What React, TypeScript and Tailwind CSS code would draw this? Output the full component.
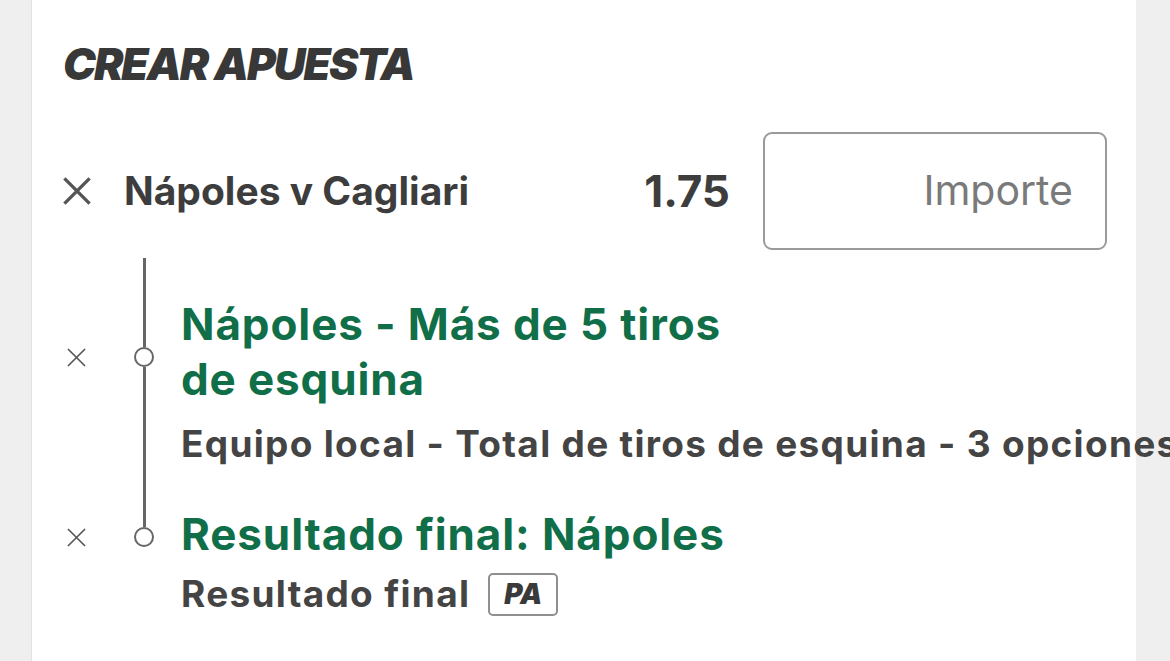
import React from "react";

function XIcon({ size, stroke }: { size: number; stroke: number }) {
  return (
    <svg width={size} height={size} viewBox="0 0 20 20" fill="none">
      <path
        d="M1 1L19 19M19 1L1 19"
        stroke="#555"
        strokeWidth={stroke}
        strokeLinecap="butt"
      />
    </svg>
  );
}

function Circle() {
  return (
    <div className="h-[20px] w-[20px] shrink-0 rounded-full border-[2.5px] border-[#666] bg-white" />
  );
}

export default function App() {
  const font = { fontFamily: "Inter, 'Liberation Sans', sans-serif" };

  return (
    <div className="flex h-[661px] w-full overflow-hidden bg-[#efefef]" style={font}>
      <div className="w-[32px] shrink-0 border-r border-[#e2e2e2]" />

      <div className="w-[1104px] shrink-0 bg-white pl-[31px] pr-[29px]">
        <h1 className="pt-[42px] text-[44px] leading-[44px] font-black italic tracking-[-0.045em] text-[#383838]">
          CREAR APUESTA
        </h1>

        <div className="mt-[46px] flex h-[118px] items-center">
          <XIcon size={28} stroke={2.4} />
          <div className="ml-[33px] text-[39px] font-bold text-[#3d3d3d]">
            Nápoles v Cagliari
          </div>
          <div className="flex-1" />
          <div className="mr-[33px] text-[44px] font-bold text-[#3d3d3d]">1.75</div>
          <div className="flex h-[118px] w-[344px] items-center justify-end rounded-[9px] border-2 border-[#9a9a9a] pr-[32px] text-[41px] text-[#7a7a7a]">
            Importe
          </div>
        </div>

        <div className="mt-[8px] grid grid-cols-[44px_74px_minmax(0,1fr)]">
          {/* line above the first selection */}
          <div />
          <div className="flex h-[39px] justify-center">
            <div className="w-[3px] bg-[#666]" />
          </div>
          <div />

          {/* selection 1 */}
          <div className="flex items-center pl-[4px] pt-[10px]">
            <XIcon size={19} stroke={1.7} />
          </div>
          <div className="flex flex-col items-center">
            <div className="w-[3px] grow basis-[10px] bg-[#666]" />
            <Circle />
            <div className="w-[3px] grow basis-0 bg-[#666]" />
          </div>
          <div className="max-w-[590px] text-[44px] leading-[55px] font-bold tracking-[0.02em] text-[#106f48]">
            Nápoles - Más de 5 tiros de esquina
          </div>

          <div />
          <div className="flex justify-center">
            <div className="w-[3px] bg-[#666]" />
          </div>
          <div className="whitespace-nowrap pt-[13px] pb-[39px] text-[37px] leading-[48px] font-bold tracking-[0.035em] text-[#444]">
            Equipo local - Total de tiros de esquina - 3 opciones
          </div>

          {/* selection 2 */}
          <div className="flex items-center pl-[4px] pt-[5px]">
            <XIcon size={19} stroke={1.7} />
          </div>
          <div className="flex flex-col items-center">
            <div className="w-[3px] grow basis-[5px] bg-[#666]" />
            <Circle />
            <div className="grow basis-0" />
          </div>
          <div className="text-[44px] leading-[55px] font-bold tracking-[0.02em] text-[#106f48]">
            Resultado final: Nápoles
          </div>

          <div />
          <div />
          <div className="flex items-center pt-[8px] text-[37px] leading-[48px] font-bold tracking-[0.035em] text-[#444]">
            <span>Resultado final</span>
            <span className="ml-[18px] flex h-[43px] w-[70px] items-center justify-center rounded-[5px] border-2 border-[#8f8f8f] text-[28px] font-black italic tracking-normal text-[#3a3a3a]">
              PA
            </span>
          </div>
        </div>
      </div>
    </div>
  );
}
